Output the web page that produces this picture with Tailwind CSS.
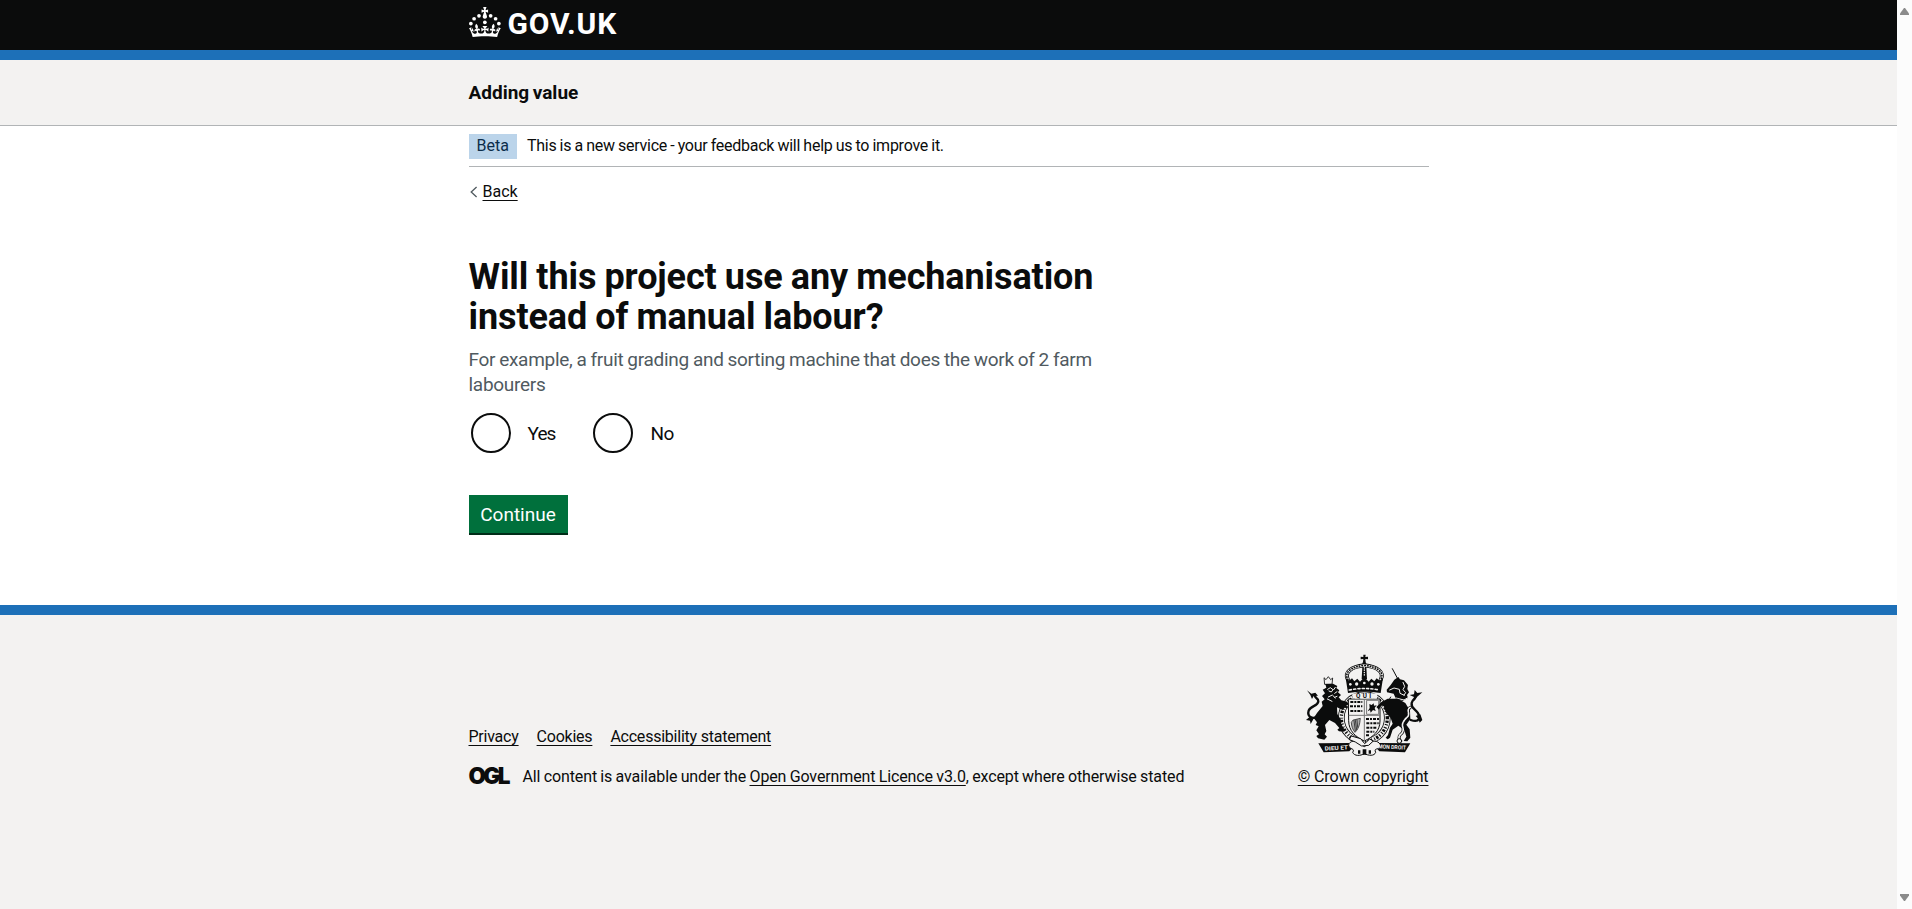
<!DOCTYPE html>
<html lang="en">
<head>
<meta charset="utf-8">
<title>Will this project use any mechanisation instead of manual labour?</title>
<script src="https://cdn.jsdelivr.net/npm/@tailwindcss/browser@4"></script>
</head>
<body class="flex h-screen overflow-hidden bg-white font-['Roboto','Liberation_Sans',sans-serif] text-[#0b0c0c]">
<div class="flex h-full w-[1897px] shrink-0 flex-col">
  <header>
    <div class="h-[50px] bg-[#0b0c0c]">
      <div class="mx-auto flex w-[960px] items-start pt-[7px] text-white">
        <svg class="h-[30px] w-8 shrink-0" viewBox="0 0 64 60" fill="currentColor" aria-hidden="true">
          <circle cx="20" cy="17.6" r="3.7"/><circle cx="10.2" cy="23.5" r="3.7"/><circle cx="3.7" cy="33.2" r="3.7"/><circle cx="31.7" cy="30.6" r="3.7"/><circle cx="43.3" cy="17.6" r="3.7"/><circle cx="53.2" cy="23.5" r="3.7"/><circle cx="59.7" cy="33.2" r="3.7"/>
          <path d="M33.1,9.8c.2-.1.3-.3.5-.5l4.6,2.4v-6.8l-4.6,1.5c-.1-.2-.3-.3-.5-.5l1.9-5.9h-6.7l1.9,5.9c-.2.1-.3.3-.5.5l-4.6-1.5v6.8l4.6-2.4c.1.2.3.3.5.5l-2.6,8c-.9,2.8,1.2,5.7,4.1,5.7h0c3,0,5.1-2.9,4.1-5.7l-2.6-8ZM37,37.9s-3.4,3.8-4.1,6.1c2.2,0,4.2-.5,6.4-2.8l-.7,8.5c-2-2.8-4.4-4.1-5.7-3.8.1,3.1.5,6.7,5.8,7.2,3.7.3,6.7-1.5,7-3.8.4-2.6-2-4.3-3.7-1.6-1.4-4.5,2.4-6.1,4.9-3.2-1.9-4.5-1.8-7.7,2.4-10.9,3,4,2.6,7.3-1.2,11.1,2.4-1.3,6.2,0,4,4.6-1.2-2.8-3.7-2.2-4.2.2-.3,1.7.7,3.7,3,4.2,1.9.3,4.7-.9,7-5.9-1.3,0-2.4.7-3.9,1.7l2.4-8c.6,2.3,1.4,3.7,2.2,4.5.6-1.6.5-2.8,0-5.3l5,1.8c-2.6,3.6-5.2,8.7-7.3,17.5-7.4-1.1-15.7-1.7-24.5-1.7h0c-8.8,0-17.1.6-24.5,1.7-2.1-8.9-4.7-13.9-7.3-17.5l5-1.8c-.5,2.5-.6,3.7,0,5.3.8-.8,1.6-2.3,2.2-4.5l2.4,8c-1.5-1-2.6-1.7-3.9-1.7,2.3,5,5.2,6.2,7,5.9,2.3-.4,3.3-2.4,3-4.2-.5-2.4-3-3.1-4.2-.2-2.2-4.6,1.6-6,4-4.6-3.7-3.7-4.2-7.1-1.2-11.1,4.2,3.2,4.3,6.4,2.4,10.9,2.5-2.8,6.3-1.3,4.9,3.2-1.8-2.7-4.1-1-3.7,1.6.3,2.3,3.3,4.1,7,3.8,5.4-.5,5.7-4.2,5.8-7.2-1.3-.2-3.7,1-5.7,3.8l-.7-8.5c2.2,2.3,4.2,2.7,6.4,2.8-.7-2.3-4.1-6.1-4.1-6.1h10.6Z"/>
        </svg>
        <span class="ml-[7px] text-[30px] leading-[34px] font-bold tracking-[0.8px]">GOV.UK</span>
      </div>
    </div>
    <div class="h-2.5 bg-[#1d70b8]"></div>
    <div class="h-[66px] border-b border-[#b1b4b6] bg-[#f3f2f1] pt-5">
      <div class="mx-auto w-[960px] text-[19px] leading-[25px] font-bold [word-spacing:-1.2px]">Adding value</div>
    </div>
  </header>

  <main class="mx-auto w-[960px]">
    <div class="flex items-center border-b border-[#b1b4b6] pt-2 pb-[7px] text-base">
      <strong class="h-[25px] bg-[#bbd4ea] px-2 leading-[23px] font-normal text-[#0c2d4a]">Beta</strong>
      <span class="ml-2.5 h-[25px] leading-[23px] tracking-[-0.25px] [word-spacing:-0.5px]">This is a new service - your feedback will help us to improve it.</span>
    </div>
    <a href="#" class="mt-[15px] flex items-center text-base leading-5">
      <svg class="mr-[5px] ml-px h-3 w-2" viewBox="0 0 8 12" fill="none" stroke="#505a5f" stroke-width="1.3"><path d="M6.6 1 1.2 6l5.4 5"/></svg>
      <span class="underline decoration-1 underline-offset-[3px]">Back</span>
    </a>
    <h1 class="mt-[55px] w-[640px] text-[36px] leading-10 font-bold tracking-[-0.1px] [word-spacing:-0.7px]">Will this project use any mechanisation<br>instead of manual labour?</h1>
    <p class="mt-2.5 w-[640px] text-[19px] leading-[25px] tracking-[-0.28px] text-[#505a5f] [word-spacing:-0.5px]">For example, a fruit grading and sorting machine that does the work of 2 farm<br>labourers</p>
    <div class="mt-4 flex pl-0.5 text-[19px] leading-10">
      <label class="flex h-10 w-[122px] items-start"><span class="mr-[17px] size-10 rounded-full border-2 border-[#0b0c0c]"></span><span class="pt-px tracking-[-0.9px]">Yes</span></label>
      <label class="flex h-10 items-start"><span class="mr-[18px] size-10 rounded-full border-2 border-[#0b0c0c]"></span><span class="pt-px tracking-[-0.5px]">No</span></label>
    </div>
    <button class="mt-[42px] block h-[38px] w-[99px] bg-[#00703c] pt-px text-center text-[19px] leading-[38px] text-white shadow-[0_2px_0_#002d18]">Continue</button>
  </main>

  <footer class="mt-[72px] grow border-t-10 border-[#1d70b8] bg-[#f3f2f1] pt-10">
    <div class="mx-auto flex h-[132px] w-[960px] items-end justify-between text-base leading-5">
      <div>
        <div class="mb-5 flex gap-[18px] tracking-[-0.23px]">
          <a href="#" class="underline decoration-1 underline-offset-[3px]">Privacy</a>
          <a href="#" class="underline decoration-1 underline-offset-[3px]">Cookies</a>
          <a href="#" class="underline decoration-1 underline-offset-[3px]">Accessibility statement</a>
        </div>
        <div class="flex">
          <span class="w-[54px] font-['Inter'] text-[22.5px] leading-[18px] font-black tracking-[-2.6px]">OGL</span>
          <p class="whitespace-pre tracking-[-0.12px] [word-spacing:-0.5px]">All content is available under the <a href="#" class="underline decoration-1 underline-offset-[3px]">Open Government Licence v3.0</a>, except where otherwise stated</p>
        </div>
      </div>
      <div class="flex flex-col items-end">
        <svg class="mr-[6px] mb-[10px] h-[103px] w-[118px]" viewBox="45 31 354 309" fill="#0b0c0c" stroke-linecap="round" stroke-linejoin="round" aria-hidden="true">
          <!-- garter and shield -->
          <ellipse cx="223" cy="223" rx="69" ry="70" fill="#f3f2f1" stroke="#0b0c0c" stroke-width="20"/>
          <ellipse cx="223" cy="223" rx="69" ry="70" fill="none" stroke="#f3f2f1" stroke-width="15"/>
          <ellipse cx="223" cy="223" rx="69" ry="70" fill="none" stroke="#0b0c0c" stroke-width="10" stroke-linecap="butt" stroke-dasharray="4 4 7 4 3 6"/>
          <path d="M176 166h94v66c0 30-21 48-47 60-26-12-47-30-47-60z" fill="#f3f2f1" stroke="#0b0c0c" stroke-width="3"/>
          <g fill="none" stroke="#0b0c0c" stroke-width="6" stroke-linecap="butt" stroke-dasharray="9 3 6 3">
            <path d="M181 175h36M180 188h37M181 202h36M228 226h39M229 239h37M229 252h33M229 264h24M228 275h12"/>
          </g>
          <path d="M231 170h35v42h-35zM223 167v124M177 215h93" fill="none" stroke="#777" stroke-width="3"/>
          <path d="m238 181 7 3 6-5 1 7 8-1-6 8 3 9-8-3-7 8-2-8-7 4 6-10z"/>
          <path d="m190 229 21-5c-2 17-3 29-16 42-7-8-11-19-11-29z" fill="#aaa" stroke="#0b0c0c" stroke-width="2"/>
          <path d="m192 231 4 30m0-31 4 28m1-29 2 22" fill="none" stroke="#0b0c0c" stroke-width="2"/>
          <!-- crown -->
          <path d="M220 33h7l-1 7 8-1v8l-8-1 1 9h-8l1-9-8 1v-8l8 1z"/>
          <circle cx="223" cy="60" r="6"/>
          <path d="M174 108c-13-22 10-39 49-43 39 4 62 21 49 43" fill="none" stroke="#0b0c0c" stroke-width="12"/>
          <path d="M174 108c-13-22 10-39 49-43 39 4 62 21 49 43" fill="none" stroke="#f3f2f1" stroke-width="7"/>
          <path d="M174 108c-13-22 10-39 49-43 39 4 62 21 49 43" fill="none" stroke="#0b0c0c" stroke-width="5" stroke-dasharray="1 7"/>
          <path d="M217 70h12l2 36h-16z"/><path d="M223 72v28" stroke="#f3f2f1" stroke-width="4" stroke-dasharray="1 6"/>
          <path d="m167 103 10 8 9-7 7 9 9-8 8 9 13-14 13 14 8-9 9 8 7-9 9 7 10-8-7 45q-49-9-98 0z"/>
          <g fill="#f3f2f1"><circle cx="181" cy="122" r="4"/><circle cx="200" cy="121" r="5"/><circle cx="223" cy="118" r="4"/><circle cx="246" cy="121" r="5"/><circle cx="265" cy="122" r="4"/></g>
          <path d="M178 139q45-9 90 0" fill="none" stroke="#f3f2f1" stroke-width="5" stroke-dasharray="6 7"/>
          <!-- motto on the garter -->
          <g font-family="Roboto" font-size="19" font-weight="700" stroke="none">
            <rect x="187" y="149" width="75" height="16" fill="#f3f2f1"/>
            <text x="198" y="164" textLength="45">QUI</text>
          </g>
          <!-- lion -->
          <path d="m103 103 5 5 7-9 7 9 6-5-2 19h-21z" fill="#f3f2f1" stroke="#0b0c0c" stroke-width="2.5"/>
          <path d="m106 121 23-1 13 7-3 6 9 7-4 6 9 8-7 7 8 9 17 4 5 8-7 3 5 9-10-2-6 7-17-8 1 20 13 21-2 8 9 15-1 9-14-1-5-5 6-5-13-15-17-9-13 15 4 18-5 10 7 7-8 9-19-4-5-7 8-5-8-12 7-12-9-4 4-8-10-13 10-15 17-21-3-13 9-7-8-10 9-8-7-11 11-6z"/>
          <path d="m113 137 8-5 8 6-5 7-7-3m-2 18 12-6 9 9m-24 3 14 7m10-42-5 7m10 6-7 5m7 9-7 3" fill="none" stroke="#f3f2f1" stroke-width="3"/>
          <path d="M86 218c-21 11-35 0-30-17 5-15 28-13 29-28 1-12-14-9-10-20" fill="none" stroke="#0b0c0c" stroke-width="7"/>
          <path d="m51 140 13 10 12-3 8 9-13 1-5 9-5-12zM48 229l14-12 8 10-8 14-2-10z"/>
          <!-- unicorn -->
          <path d="M307 75l17 32" fill="none" stroke="#0b0c0c" stroke-width="3"/>
          <path d="m313 108 12-8 5 7 12 3 12 14-2 12 5 10-6 8 3 9-16 9-20-6-7-16-20-4-1-8 12-14z"/>
          <path d="m299 139 13-6 16 4 2 12 13 6m-4-39 5 12-5 10 8 9-5 7M318 163l24 6 12-7" fill="none" stroke="#f3f2f1" stroke-width="3"/>
          <path d="M302 160c-8 12-11 25-1 37" fill="none" stroke="#0b0c0c" stroke-width="3" stroke-dasharray="4 2"/>
          <path d="m276 174 17-9 31 0 22 13 14 23 1 25-12 17 10 14 2 25-9 11-11-1 8-13-6-20-18-13-17 12-8 24-7 5-6-5 7-8 6-22 8-12-6-17-15-17-6-21-9 2-5 11-8-8z"/>
          <path d="M361 191c-14 7 1 20-9 29s-17 20-14 29 2 17-6 23-4 13-4 18" fill="none" stroke="#0b0c0c" stroke-width="9"/>
          <path d="M361 191c-14 7 1 20-9 29s-17 20-14 29 2 17-6 23-4 13-4 18" fill="none" stroke="#f3f2f1" stroke-width="5" stroke-dasharray="6 3"/>
          <circle cx="328" cy="292" r="7" fill="#f3f2f1" stroke="#0b0c0c" stroke-width="3"/>
          <path d="M362 229c29 10 29-10 21-22-8-12-21-14-18-29 3-14 17-14 10-24" fill="none" stroke="#0b0c0c" stroke-width="7"/>
          <path d="m397 146-15 2-8-9-2 13-13 2 13 6 1 12 8-12zM389 237l-4-12-8-8 14-5 6 17z"/>
          <!-- motto scroll -->
          <path d="m85 299 94-1 8 15-9 10-77 3z"/><path d="m361 299-94-1-8 15 9 10 77 3z"/>
          <path d="M176 308c-3-14 17-19 25-14l22 15 22-15c12-5 29 3 25 15-4 10-20 3-13 17-4 12-21 10-34 4-12 7-30 8-35-4 8-12-7-8-12-18z" fill="#f3f2f1" stroke="#0b0c0c" stroke-width="3"/>
          <path d="m184 277 28 8 12 15 15-14 11 6-14 13-21 2-19-12-17-7z" fill="#f3f2f1" stroke="#0b0c0c" stroke-width="3"/>
          <path d="M204 320h7v10h-7zM218 317h11v16h-11zM236 320h7v10h-7z"/>
          <g font-family="Roboto" font-size="17" font-weight="700" fill="#f3f2f1" stroke="none">
            <text x="104" y="319" textLength="70" lengthAdjust="spacingAndGlyphs" transform="rotate(-3 140 312)">DIEU ET</text>
            <text x="264" y="316" textLength="84" lengthAdjust="spacingAndGlyphs" transform="rotate(3 306 312)">MON DROIT</text>
          </g>
        </svg>
        <a href="#" class="tracking-[-0.1px] underline decoration-1 underline-offset-[3px]">© Crown copyright</a>
      </div>
    </div>
  </footer>
</div>
<div class="flex h-full w-[15px] flex-col items-center justify-between bg-[#fcfcfc] pt-2 pb-2 text-[#8b8b8b]" aria-hidden="true">
  <svg class="h-[7px] w-[9px]" viewBox="0 0 9 7" fill="currentColor"><path d="M4 0h1l4 5.5V7H0V5.5z"/></svg>
  <svg class="h-[7px] w-[9px]" viewBox="0 0 9 7" fill="currentColor"><path d="M4 7h1l4-5.5V0H0v1.5z"/></svg>
</div>
</body>
</html>
